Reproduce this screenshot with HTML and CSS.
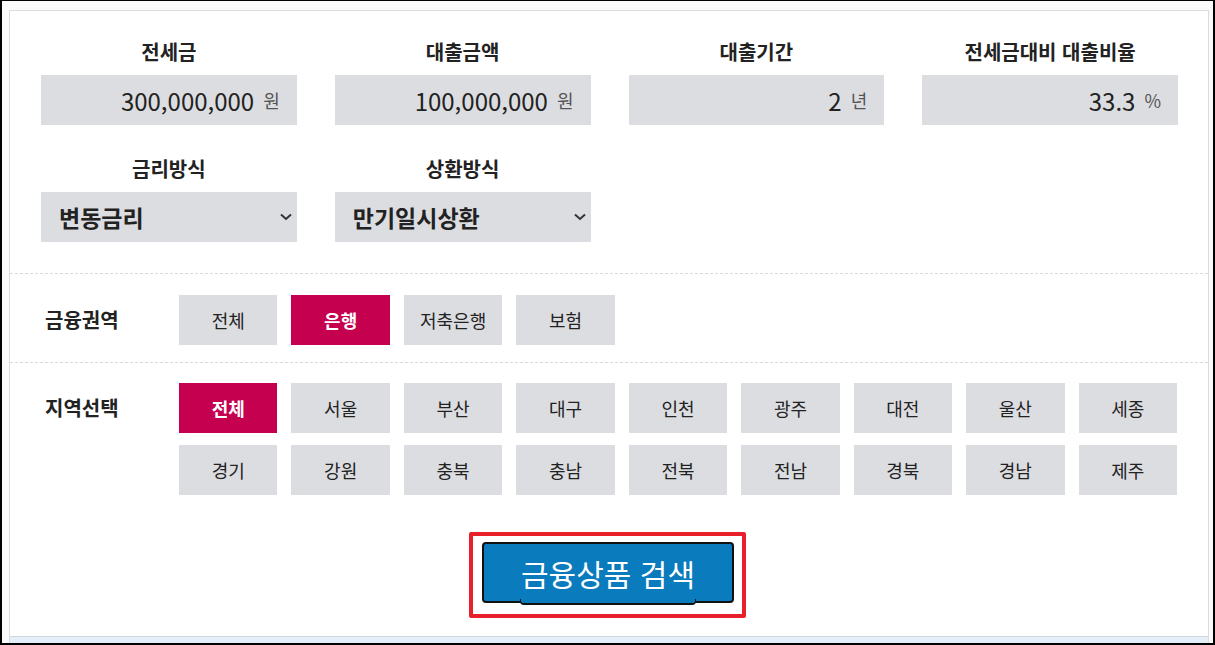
FILE: index.html
```html
<!DOCTYPE html>
<html lang="ko">
<head>
    <meta charset="UTF-8">
    <title>전세대출 상품 검색</title>
    <link rel="stylesheet" href="styles.css">
</head>
<body>
    <div class="frame">
        <div class="panel">
            <div class="fields">
                <div class="field">
                    <h3>전세금</h3>
                    <div class="value-box"><span class="num">300,000,000</span><span class="unit">원</span></div>
                </div>
                <div class="field">
                    <h3>대출금액</h3>
                    <div class="value-box"><span class="num">100,000,000</span><span class="unit">원</span></div>
                </div>
                <div class="field">
                    <h3>대출기간</h3>
                    <div class="value-box"><span class="num">2</span><span class="unit">년</span></div>
                </div>
                <div class="field">
                    <h3>전세금대비 대출비율</h3>
                    <div class="value-box"><span class="num">33.3</span><span class="unit">%</span></div>
                </div>
                <div class="field">
                    <h3>금리방식</h3>
                    <div class="select-wrap">
                        <select>
                            <option>변동금리</option>
                            <option>고정금리</option>
                        </select>
                        <svg class="chevron" viewBox="0 0 12 8"><path d="M1 1.5l5 4.5 5-4.5" fill="none" stroke="#333" stroke-width="2"/></svg>
                    </div>
                </div>
                <div class="field">
                    <h3>상환방식</h3>
                    <div class="select-wrap">
                        <select>
                            <option>만기일시상환</option>
                            <option>분할상환</option>
                        </select>
                        <svg class="chevron" viewBox="0 0 12 8"><path d="M1 1.5l5 4.5 5-4.5" fill="none" stroke="#333" stroke-width="2"/></svg>
                    </div>
                </div>
            </div>

            <div class="choice-row first">
                <div class="choice-label">금융권역</div>
                <div class="choice-grid">
                    <button class="chip">전체</button>
                    <button class="chip active">은행</button>
                    <button class="chip">저축은행</button>
                    <button class="chip">보험</button>
                </div>
            </div>

            <div class="choice-row">
                <div class="choice-label">지역선택</div>
                <div class="choice-grid">
                    <button class="chip active">전체</button>
                    <button class="chip">서울</button>
                    <button class="chip">부산</button>
                    <button class="chip">대구</button>
                    <button class="chip">인천</button>
                    <button class="chip">광주</button>
                    <button class="chip">대전</button>
                    <button class="chip">울산</button>
                    <button class="chip">세종</button>
                    <button class="chip">경기</button>
                    <button class="chip">강원</button>
                    <button class="chip">충북</button>
                    <button class="chip">충남</button>
                    <button class="chip">전북</button>
                    <button class="chip">전남</button>
                    <button class="chip">경북</button>
                    <button class="chip">경남</button>
                    <button class="chip">제주</button>
                </div>
            </div>

            <div class="search-area">
                <div class="highlight">
                    <button class="search-btn">금융상품 검색</button>
                </div>
            </div>

            <div class="result-bar"></div>
        </div>
    </div>
</body>
</html>
```

FILE: styles.css
```css
* {
    margin: 0;
    padding: 0;
    box-sizing: border-box;
}

body {
    font-family: 'Noto Sans CJK KR', 'Noto Sans', sans-serif;
    background-color: #fafafa;
    color: #222;
}

.frame {
    height: 645px;
    border: solid #000;
    border-width: 1px 2px 2px 2px;
    padding: 9px 4px 0 7px;
    overflow: hidden;
}

.panel {
    background-color: #fff;
    border: 1px solid #dcdcdc;
    border-bottom: none;
    min-height: 700px;
}

/* top input fields */
.fields {
    display: grid;
    grid-template-columns: repeat(4, 1fr);
    column-gap: 38px;
    row-gap: 31px;
    padding: 28px 30px 31px 31px;
}

.field h3 {
    text-align: center;
    font-size: 20px;
    font-weight: bold;
    line-height: 26px;
    margin-bottom: 10px;
    color: #222;
}

.value-box {
    height: 50px;
    background-color: #dcdde1;
    display: flex;
    justify-content: flex-end;
    align-items: center;
    gap: 9px;
    padding-right: 17px;
}

.value-box .num {
    font-size: 24px;
    color: #222;
}

.value-box .unit {
    font-size: 18px;
    color: #555;
}

.select-wrap {
    position: relative;
}

.select-wrap select {
    width: 100%;
    height: 50px;
    appearance: none;
    -webkit-appearance: none;
    border: none;
    outline: none;
    background-color: #dcdde1;
    font-family: inherit;
    font-size: 23px;
    font-weight: bold;
    color: #222;
    padding-left: 18px;
}

.select-wrap .chevron {
    position: absolute;
    right: 5px;
    top: 21px;
    width: 12px;
    height: 8px;
    pointer-events: none;
}

/* chip rows */
.choice-row {
    display: flex;
    border-top: 1px dashed #dadada;
    padding: 20px 31px 0 31px;
}

.choice-row.first {
    padding-top: 21px;
    padding-bottom: 17px;
}

.choice-label {
    width: 138px;
    flex-shrink: 0;
    padding-left: 4px;
    font-size: 20px;
    font-weight: bold;
    line-height: 50px;
}

.choice-grid {
    flex-grow: 1;
    display: grid;
    grid-template-columns: repeat(9, 1fr);
    column-gap: 14px;
    row-gap: 12px;
}

.chip {
    height: 50px;
    border: none;
    background-color: #dcdde1;
    font-family: inherit;
    font-size: 18px;
    color: #222;
    cursor: pointer;
}

.chip.active {
    background-color: #c4004f;
    color: #fff;
    font-weight: bold;
}

/* search button */
.search-area {
    text-align: center;
    padding: 37px 3px 18px 0;
}

.highlight {
    display: inline-block;
    border: 4px solid #e8202a;
    border-radius: 2px;
    padding: 6px 8px 11px 9px;
}

.search-btn {
    position: relative;
    display: block;
    width: 252px;
    height: 61px;
    background-color: #0a7bbd;
    border: 2px solid #111;
    border-radius: 4px;
    color: #fff;
    font-family: inherit;
    font-size: 30px;
    cursor: pointer;
}

.search-btn::after {
    content: '';
    position: absolute;
    left: 36px;
    right: 36px;
    bottom: -4px;
    height: 4px;
    border: solid #111;
    border-width: 0 1px 2px 1px;
    border-radius: 0 0 4px 4px;
    background-color: #0a7bbd;
}

.result-bar {
    height: 30px;
    border-top: 1px solid #cfd6dd;
    background-color: #e4eff9;
}
```
